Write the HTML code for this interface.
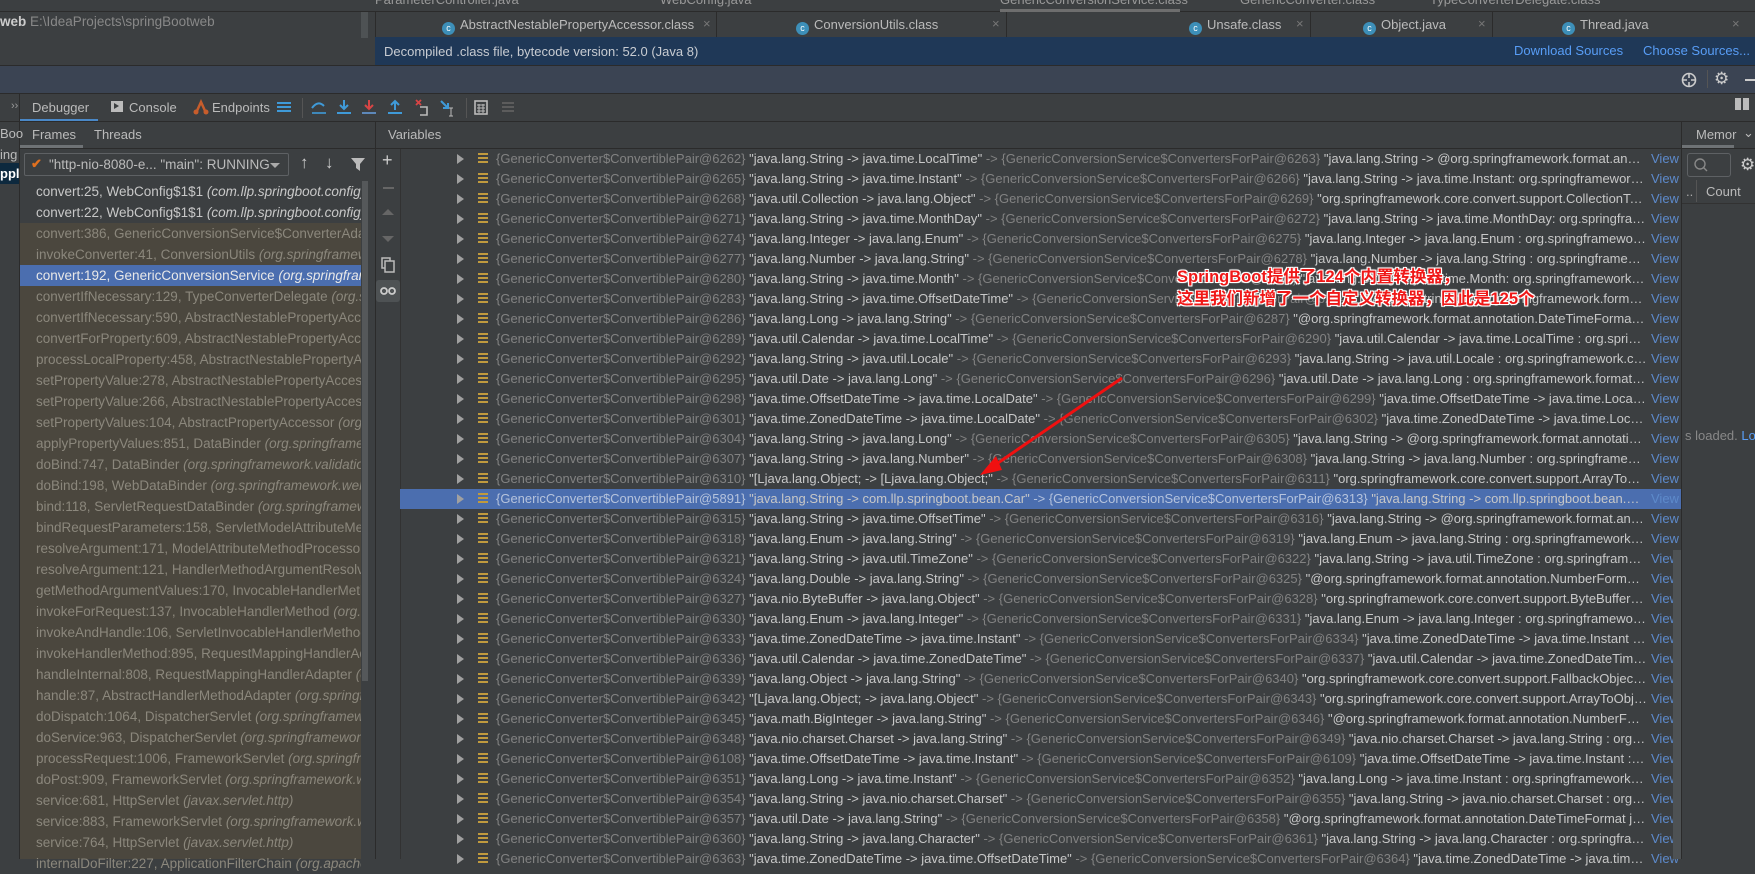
<!DOCTYPE html>
<html><head><meta charset="utf-8">
<style>
*{box-sizing:border-box;margin:0;padding:0}
body{width:1755px;height:859px;overflow:hidden;background:#3c3f41;font-family:"Liberation Sans","Noto Sans CJK SC",sans-serif;font-size:13px;color:#bbbbbb;position:relative}
.a{position:absolute;white-space:nowrap}
.tabsep{position:absolute;top:12px;height:25px;width:1px;background:#2b2b2b}
.ci{display:inline-block;width:13px;height:13px;border-radius:50%;background:#3d8fb8;color:#fff;font-size:9px;line-height:13px;text-align:center;vertical-align:-2px;margin-right:5px}
.fr{position:absolute;left:20px;width:341px;height:21px;line-height:21px;padding-left:16px;overflow:hidden;white-space:nowrap;font-size:13.5px}
.fr i{color:inherit}
.vr{position:absolute;left:400px;width:1281px;height:20px;line-height:20px;display:flex;white-space:nowrap}
.vr .tri{width:0;height:0;border-left:7px solid #a0a0a0;border-top:5px solid transparent;border-bottom:5px solid transparent;margin:5px 0 0 57px}
.vr .ic{width:10px;height:11px;margin:4px 0 0 14px;background:repeating-linear-gradient(#c09a3e 0 2px,transparent 2px 4px)}
.vr .tx{flex:1;overflow:hidden;text-overflow:ellipsis;margin-left:8px;color:#c8c8c8}
.vr .g{color:#828282}
.vr .vw{width:34px;color:#5d8acb;padding-left:4px}
.sel{background:#4b6eaf}
.sel .g{color:#b5c3dd}
</style></head><body>
<div class="a" style="left:0;top:0;width:1755px;height:12px;background:#3c3f41;border-bottom:1px solid #2b2b2b"></div>
<div class="a" style="left:375px;top:-8px;color:#999">ParameterController.java</div>
<div class="a" style="left:660px;top:-8px;color:#999">WebConfig.java</div>
<div class="a" style="left:1000px;top:-8px;color:#999">GenericConversionService.class</div>
<div class="a" style="left:1240px;top:-8px;color:#999">GenericConverter.class</div>
<div class="a" style="left:1430px;top:-8px;color:#999">TypeConverterDelegate.class</div>
<div class="a" style="left:1000px;top:9px;width:180px;height:3px;background:#6e6e6e"></div>
<div class="a" style="left:0;top:12px;width:375px;height:52px;background:#3c3f41"></div>
<div class="a" style="left:0;top:14px;font-size:13.5px"><b style="color:#ccc">web</b> <span style="color:#888">E:\IdeaProjects\springBootweb</span></div>
<div class="a" style="left:361px;top:12px;width:7px;height:26px;background:#4e5254"></div>
<div class="a" style="left:375px;top:12px;width:1380px;height:25px;background:#3c3f41;border-left:1px solid #2b2b2b"></div>
<div class="a" style="left:442px;top:17px"><span class="ci">c</span>AbstractNestablePropertyAccessor.class</div>
<div class="a" style="left:703px;top:16px;color:#777">×</div>
<div class="tabsep" style="left:716px"></div>
<div class="a" style="left:796px;top:17px"><span class="ci">c</span>ConversionUtils.class</div>
<div class="a" style="left:992px;top:16px;color:#777">×</div>
<div class="tabsep" style="left:1006px"></div>
<div class="a" style="left:1189px;top:17px"><span class="ci">c</span>Unsafe.class</div>
<div class="a" style="left:1296px;top:16px;color:#777">×</div>
<div class="tabsep" style="left:1310px"></div>
<div class="a" style="left:1363px;top:17px"><span class="ci">c</span>Object.java</div>
<div class="a" style="left:1478px;top:16px;color:#777">×</div>
<div class="tabsep" style="left:1492px"></div>
<div class="a" style="left:1562px;top:17px"><span class="ci">c</span>Thread.java</div>
<div class="a" style="left:1732px;top:16px;color:#777">×</div>
<div class="a" style="left:375px;top:37px;width:1380px;height:28px;background:#1f3857"></div>
<div class="a" style="left:384px;top:44px;color:#c8ccd2">Decompiled .class file, bytecode version: 52.0 (Java 8)</div>
<div class="a" style="left:1514px;top:43px;color:#589df6">Download Sources</div>
<div class="a" style="left:1643px;top:43px;color:#589df6">Choose Sources...</div>
<div class="a" style="left:0;top:65px;width:1755px;height:29px;background:#3b4453;border-top:1px solid #2b2b2b;border-bottom:1px solid #2b2b2b"></div>
<svg class="a" style="left:1681px;top:72px" width="16" height="16"><circle cx="8" cy="8" r="6.5" fill="none" stroke="#ccc" stroke-width="1.6"/><path d="M8 1v5M8 10v5M1 8h5M10 8h5" stroke="#ccc" stroke-width="1.6"/></svg>
<div class="a" style="left:1707px;top:70px;width:1px;height:18px;background:#555"></div>
<div class="a" style="left:1714px;top:69px;color:#ccc;font-size:17px">⚙</div>
<div class="a" style="left:1745px;top:79px;width:10px;height:2px;background:#ccc"></div>
<div class="a" style="left:11px;top:100px;color:#999;font-size:11px">››</div>
<div class="a" style="left:19px;top:94px;width:1px;height:765px;background:#2b2b2b"></div>
<div class="a" style="left:32px;top:100px">Debugger</div>
<div class="a" style="left:20px;top:119px;width:78px;height:2px;background:#4a88c7"></div>
<div class="a" style="left:111px;top:101px;width:12px;height:11px;background:#bbb"></div>
<div class="a" style="left:114px;top:103px;width:0;height:0;border-left:5px solid #3c3f41;border-top:3.5px solid transparent;border-bottom:3.5px solid transparent"></div>
<div class="a" style="left:129px;top:100px">Console</div>
<svg class="a" style="left:193px;top:99px" width="16" height="16"><path d="M3 14L8 3L13 14" stroke="#c75d2c" stroke-width="2.5" fill="none"/><circle cx="3" cy="13" r="2.5" fill="#c75d2c"/><circle cx="13" cy="13" r="2.5" fill="#c75d2c"/></svg>
<div class="a" style="left:212px;top:100px">Endpoints</div>
<div class="a" style="left:277px;top:102px;width:14px;height:2px;background:#3f9ad8;box-shadow:0 4px 0 #3f9ad8,0 8px 0 #3f9ad8"></div>
<div class="a" style="left:302px;top:98px;width:1px;height:20px;background:#555"></div>
<svg class="a" style="left:310px;top:98px" width="200" height="20">
<path d="M2 10 Q8 2 14 8" stroke="#3f9ad8" stroke-width="2" fill="none"/><path d="M2 15h14" stroke="#3f9ad8" stroke-width="1.6"/>
<path d="M34 2v9M30 7l4 4 4-4M27 15h14" stroke="#3f9ad8" stroke-width="2" fill="none"/>
<path d="M59 2v9M55 7l4 4 4-4M52 15h14" stroke="#d84545" stroke-width="2" fill="none"/><path d="M52 15h14" stroke="#3f9ad8" stroke-width="1.6"/>
<path d="M85 12V3M81 7l4-4 4 4M78 15h14" stroke="#3f9ad8" stroke-width="2" fill="none"/>
<path d="M106 2l5 5M111 2l-5 5" stroke="#d84545" stroke-width="1.8"/><path d="M110 9h7v8h-7" stroke="#bbb" stroke-width="1.6" fill="none"/>
<path d="M131 3l7 7M138 5v5h-5" stroke="#3f9ad8" stroke-width="2" fill="none"/><path d="M141 10v8M139 10h4M139 18h4" stroke="#bbb" stroke-width="1"/>
</svg>
<div class="a" style="left:466px;top:98px;width:1px;height:20px;background:#555"></div>
<svg class="a" style="left:474px;top:100px" width="50" height="16"><rect x="1" y="1" width="12" height="13" fill="none" stroke="#bbb" stroke-width="1.6"/><path d="M3 5h8M3 8h8M3 11h8M5 4v9M9 4v9" stroke="#bbb" stroke-width="1"/><path d="M28 3h12M28 7h12M28 11h12" stroke="#666" stroke-width="1.5"/></svg>
<div class="a" style="left:1735px;top:98px;width:14px;height:12px;background:repeating-linear-gradient(90deg,#bbb 0 6px,transparent 6px 8px)"></div>
<div class="a" style="left:0;top:121px;width:1755px;height:1px;background:#2b2b2b"></div>
<div class="a" style="left:0;top:126px;color:#bbb">Boo</div>
<div class="a" style="left:0;top:147px;color:#bbb">ing</div>
<div class="a" style="left:0;top:163px;width:19px;height:21px;background:#0d293e"></div>
<div class="a" style="left:0;top:166px;color:#fff;font-weight:bold">ppl</div>
<div class="a" style="left:32px;top:127px">Frames</div>
<div class="a" style="left:94px;top:127px">Threads</div>
<div class="a" style="left:20px;top:145px;width:63px;height:3px;background:#6e7275"></div>
<div class="a" style="left:20px;top:148px;width:1735px;height:1px;background:#2b2b2b"></div>
<div class="a" style="left:375px;top:122px;width:1px;height:737px;background:#2b2b2b"></div>
<div class="a" style="left:388px;top:127px">Variables</div>
<div class="a" style="left:24px;top:153px;width:265px;height:23px;border:1px solid #5e6164;border-radius:2px;background:#3c3f41"></div>
<div class="a" style="left:31px;top:156px;color:#e0701f;font-weight:bold">✔</div>
<div class="a" style="left:49px;top:157px;font-size:13.5px">"http-nio-8080-e... "main": RUNNING</div>
<div class="a" style="left:270px;top:163px;border-top:5px solid #aaa;border-left:5px solid transparent;border-right:5px solid transparent"></div>
<div class="a" style="left:300px;top:153px;font-size:17px;color:#ccc">↑</div>
<div class="a" style="left:325px;top:153px;font-size:17px;color:#ccc">↓</div>
<svg class="a" style="left:350px;top:156px" width="16" height="16"><path d="M1 2h14L10 8v7L6 12V8z" fill="#bbb"/></svg>
<div class="a" style="left:20px;top:181px;width:341px;height:678px;background:#4b473e"></div>
<div class="a" style="left:20px;top:181px;width:341px;height:42px;background:#3c3f41"></div>
<div class="a" style="left:361px;top:181px;width:9px;height:678px;background:#3c3f41"></div>
<div class="a" style="left:362px;top:181px;width:6px;height:500px;background:#55585a"></div>
<div id="frames"></div>
<div class="a" style="left:400px;top:149px;width:1px;height:710px;background:#323232"></div>
<div class="a" style="left:382px;top:150px;font-size:18px;color:#ccc">+</div>
<div class="a" style="left:383px;top:187px;width:11px;height:2px;background:#666"></div>
<div class="a" style="left:382px;top:209px;border-bottom:6px solid #666;border-left:6px solid transparent;border-right:6px solid transparent"></div>
<div class="a" style="left:382px;top:236px;border-top:6px solid #666;border-left:6px solid transparent;border-right:6px solid transparent"></div>
<svg class="a" style="left:381px;top:257px" width="14" height="16"><rect x="1" y="1" width="8" height="10" fill="none" stroke="#bbb" stroke-width="1.5"/><rect x="4" y="4" width="9" height="11" fill="#3c3f41" stroke="#bbb" stroke-width="1.5"/></svg>
<div class="a" style="left:376px;top:280px;width:24px;height:22px;background:#4e5254;border-radius:3px"></div>
<svg class="a" style="left:380px;top:285px" width="16" height="12"><circle cx="4" cy="6" r="3" fill="none" stroke="#ccc" stroke-width="1.8"/><circle cx="12" cy="6" r="3" fill="none" stroke="#ccc" stroke-width="1.8"/></svg>
<div id="vars"></div>
<div class="a" style="left:1681px;top:122px;width:1px;height:737px;background:#2b2b2b"></div>
<div class="a" style="left:1682px;top:149px;width:73px;height:710px;background:#3c3f41"></div>
<div class="a" style="left:1696px;top:127px">Memor</div>
<div class="a" style="left:1743px;top:125px;color:#bbb">⌄</div>
<div class="a" style="left:1682px;top:145px;width:52px;height:3px;background:#6e7275"></div>
<div class="a" style="left:1687px;top:153px;width:44px;height:24px;border:1px solid #5e6164;border-radius:3px"></div>
<svg class="a" style="left:1693px;top:157px" width="16" height="16"><circle cx="7" cy="7" r="5" fill="none" stroke="#888" stroke-width="1.4"/><path d="M10.5 10.5L14 14" stroke="#888" stroke-width="1.4"/></svg>
<div class="a" style="left:1740px;top:155px;color:#ccc;font-size:17px">⚙</div>
<div class="a" style="left:1682px;top:179px;width:73px;height:25px;background:#3c3f41;border-bottom:1px solid #323232"></div>
<div class="a" style="left:1696px;top:180px;width:1px;height:22px;background:#555"></div>
<div class="a" style="left:1686px;top:184px;color:#aaa">..</div>
<div class="a" style="left:1706px;top:184px">Count</div>
<div class="a" style="left:1685px;top:428px;color:#888">s loaded. <span style="color:#589df6">Lo</span></div>
<div class="a" style="left:1673px;top:550px;width:8px;height:309px;background:#4e5254"></div>
<svg class="a" style="left:0;top:0" width="1755" height="859">
<line x1="1122" y1="378" x2="992" y2="467" stroke="#f01010" stroke-width="3"/>
<path d="M980 475 L996 456 L1002 470 Z" fill="#f01010"/>
</svg>
<div class="a" style="left:1177px;top:266px;font-size:16.5px;font-weight:bold;color:#f01818;line-height:22px;text-shadow:0 0 2px #fff,0 0 2px #fff,1px 1px 0 #fff,-1px -1px 0 #fff,1px -1px 0 #fff,-1px 1px 0 #fff">SpringBoot提供了124个内置转换器，<br>这里我们新增了一个自定义转换器，因此是125个</div>
<script>
var F=[["convert:25, WebConfig$1$1","com.llp.springboot.config"],["convert:22, WebConfig$1$1","com.llp.springboot.config"],["convert:386, GenericConversionService$ConverterAdapter","org.springframework.core.convert.support"],["invokeConverter:41, ConversionUtils","org.springframework.core.convert.support"],["convert:192, GenericConversionService","org.springframework.core.convert.support"],["convertIfNecessary:129, TypeConverterDelegate","org.springframework.beans"],["convertIfNecessary:590, AbstractNestablePropertyAccessor","org.springframework.beans"],["convertForProperty:609, AbstractNestablePropertyAccessor","org.springframework.beans"],["processLocalProperty:458, AbstractNestablePropertyAccessor","org.springframework.beans"],["setPropertyValue:278, AbstractNestablePropertyAccessor","org.springframework.beans"],["setPropertyValue:266, AbstractNestablePropertyAccessor","org.springframework.beans"],["setPropertyValues:104, AbstractPropertyAccessor","org.springframework.beans"],["applyPropertyValues:851, DataBinder","org.springframework.validation"],["doBind:747, DataBinder","org.springframework.validation"],["doBind:198, WebDataBinder","org.springframework.web.bind"],["bind:118, ServletRequestDataBinder","org.springframework.web.bind"],["bindRequestParameters:158, ServletModelAttributeMethodProcessor","org.springframework"],["resolveArgument:171, ModelAttributeMethodProcessor","org.springframework"],["resolveArgument:121, HandlerMethodArgumentResolverComposite","org"],["getMethodArgumentValues:170, InvocableHandlerMethod","org"],["invokeForRequest:137, InvocableHandlerMethod","org.springframework"],["invokeAndHandle:106, ServletInvocableHandlerMethod","org.springframework"],["invokeHandlerMethod:895, RequestMappingHandlerAdapter","org"],["handleInternal:808, RequestMappingHandlerAdapter","org.springframework"],["handle:87, AbstractHandlerMethodAdapter","org.springframework.web"],["doDispatch:1064, DispatcherServlet","org.springframework.web.servlet"],["doService:963, DispatcherServlet","org.springframework.web.servlet"],["processRequest:1006, FrameworkServlet","org.springframework.web.servlet"],["doPost:909, FrameworkServlet","org.springframework.web.servlet"],["service:681, HttpServlet","javax.servlet.http"],["service:883, FrameworkServlet","org.springframework.web.servlet"],["service:764, HttpServlet","javax.servlet.http"],["internalDoFilter:227, ApplicationFilterChain","org.apache.catalina.core"]];
var h="";F.forEach(function(f,i){var c=i<2?"#c8c8c8":(i==4?"#e8e8e8":"#8b877c");var bg=i==4?"background:#4b6eaf;":"";h+='<div class="fr" style="top:'+(181+i*21)+'px;color:'+c+';'+bg+'">'+f[0]+' <i>('+f[1]+')</i></div>';});
document.getElementById("frames").innerHTML=h;
var V=[["6262","java.lang.String -> java.time.LocalTime","6263","java.lang.String -> @org.springframework.format.annotation.DateTimeFormat java.time.LocalTime"],["6265","java.lang.String -> java.time.Instant","6266","java.lang.String -> java.time.Instant: org.springframework.format.support"],["6268","java.util.Collection -> java.lang.Object","6269","org.springframework.core.convert.support.CollectionToObjectConverter"],["6271","java.lang.String -> java.time.MonthDay","6272","java.lang.String -> java.time.MonthDay: org.springframework.format"],["6274","java.lang.Integer -> java.lang.Enum","6275","java.lang.Integer -> java.lang.Enum : org.springframework.core"],["6277","java.lang.Number -> java.lang.String","6278","java.lang.Number -> java.lang.String : org.springframework.core"],["6280","java.lang.String -> java.time.Month","6281","java.lang.String -> java.time.Month: org.springframework.format"],["6283","java.lang.String -> java.time.OffsetDateTime","6284","java.lang.String -> @org.springframework.format.annotation"],["6286","java.lang.Long -> java.lang.String","6287","@org.springframework.format.annotation.DateTimeFormat java.lang.Long"],["6289","java.util.Calendar -> java.time.LocalTime","6290","java.util.Calendar -> java.time.LocalTime : org.springframework"],["6292","java.lang.String -> java.util.Locale","6293","java.lang.String -> java.util.Locale : org.springframework.core"],["6295","java.util.Date -> java.lang.Long","6296","java.util.Date -> java.lang.Long : org.springframework.format.datetime"],["6298","java.time.OffsetDateTime -> java.time.LocalDate","6299","java.time.OffsetDateTime -> java.time.LocalDate : org"],["6301","java.time.ZonedDateTime -> java.time.LocalDate","6302","java.time.ZonedDateTime -> java.time.LocalDate : org"],["6304","java.lang.String -> java.lang.Long","6305","java.lang.String -> @org.springframework.format.annotation.NumberFormat"],["6307","java.lang.String -> java.lang.Number","6308","java.lang.String -> java.lang.Number : org.springframework.core"],["6310","[Ljava.lang.Object; -> [Ljava.lang.Object;","6311","org.springframework.core.convert.support.ArrayToArrayConverter"],["5891","java.lang.String -> com.llp.springboot.bean.Car","6313","java.lang.String -> com.llp.springboot.bean.Ca "],["6315","java.lang.String -> java.time.OffsetTime","6316","java.lang.String -> @org.springframework.format.annotation"],["6318","java.lang.Enum -> java.lang.String","6319","java.lang.Enum -> java.lang.String : org.springframework.core"],["6321","java.lang.String -> java.util.TimeZone","6322","java.lang.String -> java.util.TimeZone : org.springframework.core"],["6324","java.lang.Double -> java.lang.String","6325","@org.springframework.format.annotation.NumberFormat java.lang.Double"],["6327","java.nio.ByteBuffer -> java.lang.Object","6328","org.springframework.core.convert.support.ByteBufferConverter"],["6330","java.lang.Enum -> java.lang.Integer","6331","java.lang.Enum -> java.lang.Integer : org.springframework.core"],["6333","java.time.ZonedDateTime -> java.time.Instant","6334","java.time.ZonedDateTime -> java.time.Instant : org.spring"],["6336","java.util.Calendar -> java.time.ZonedDateTime","6337","java.util.Calendar -> java.time.ZonedDateTime : org"],["6339","java.lang.Object -> java.lang.String","6340","org.springframework.core.convert.support.FallbackObjectToStringConverter"],["6342","[Ljava.lang.Object; -> java.lang.Object","6343","org.springframework.core.convert.support.ArrayToObjectConverter"],["6345","java.math.BigInteger -> java.lang.String","6346","@org.springframework.format.annotation.NumberFormat java"],["6348","java.nio.charset.Charset -> java.lang.String","6349","java.nio.charset.Charset -> java.lang.String : org.spring"],["6108","java.time.OffsetDateTime -> java.time.Instant","6109","java.time.OffsetDateTime -> java.time.Instant : org.spring"],["6351","java.lang.Long -> java.time.Instant","6352","java.lang.Long -> java.time.Instant : org.springframework.format"],["6354","java.lang.String -> java.nio.charset.Charset","6355","java.lang.String -> java.nio.charset.Charset : org.spring"],["6357","java.util.Date -> java.lang.String","6358","@org.springframework.format.annotation.DateTimeFormat java.util.Date"],["6360","java.lang.String -> java.lang.Character","6361","java.lang.String -> java.lang.Character : org.springframework"],["6363","java.time.ZonedDateTime -> java.time.OffsetDateTime","6364","java.time.ZonedDateTime -> java.time.OffsetDateTime : org"]];
h="";V.forEach(function(v,i){h+='<div class="vr'+(i==17?' sel':'')+'" style="top:'+(149+i*20)+'px"><div class="tri"></div><div class="ic"></div><div class="tx"><span class="g">{GenericConverter$ConvertiblePair@'+v[0]+'}</span> "'+v[1]+'" <span class="g">-&gt; {GenericConversionService$ConvertersForPair@'+v[2]+'}</span> "'+v[3]+'"</div><div class="vw">View</div></div>';});
document.getElementById("vars").innerHTML=h;
</script>
</body></html>
